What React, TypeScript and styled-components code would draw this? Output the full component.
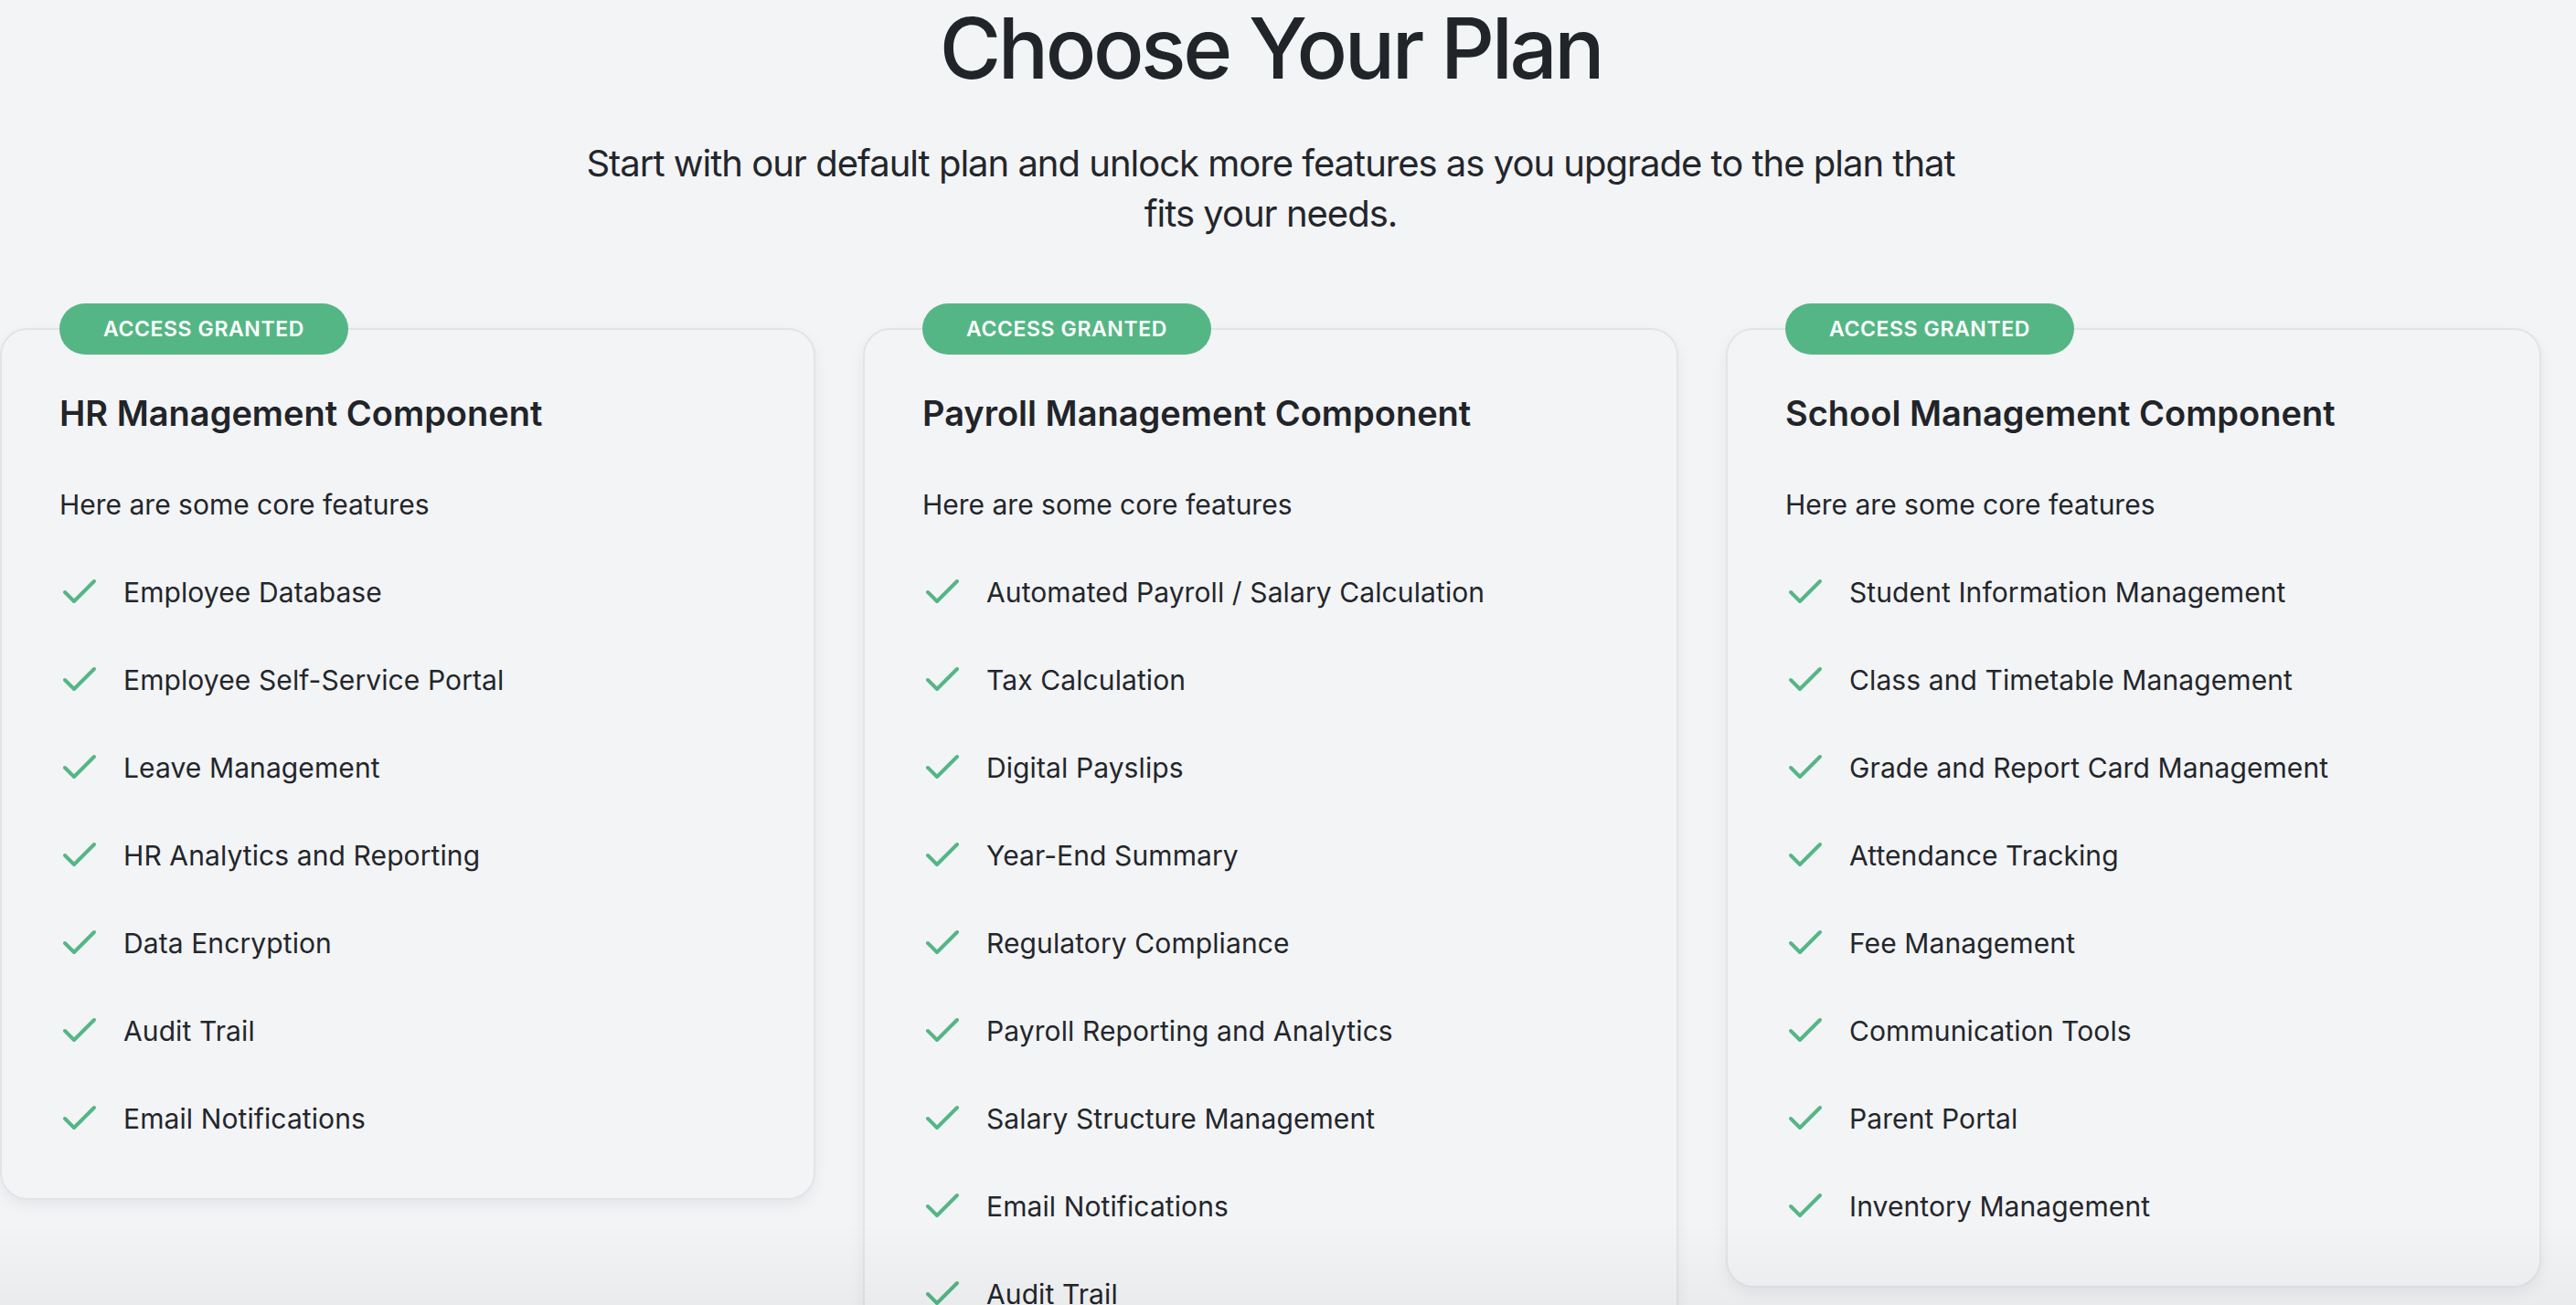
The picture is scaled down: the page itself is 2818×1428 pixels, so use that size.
import React from "react";
import styled, { createGlobalStyle } from "styled-components";
import { Check } from "lucide-react";

const GlobalStyle = createGlobalStyle`
  html, body {
    margin: 0;
    padding: 0;
    background: #f3f4f6;
    overflow: hidden;
  }
  body {
    font-family: Inter, "Noto Sans", sans-serif;
    color: #212429;
  }
  * { box-sizing: border-box; }
`;

const Page = styled.main`
  width: 2780px;
  height: 1428px;
  display: flex;
  flex-direction: column;
  align-items: center;
`;

const Title = styled.h1`
  margin: 0;
  font-size: 92px;
  line-height: 106px;
  font-weight: 500;
  letter-spacing: -3.4px;
  color: #212429;
  text-align: center;
`;

const Subtitle = styled.p`
  margin: 45px 0 0;
  width: 1560px;
  font-size: 40px;
  line-height: 55px;
  font-weight: 400;
  letter-spacing: -1px;
  color: #23262b;
  text-align: center;
`;

const Grid = styled.section`
  margin-top: 98px;
  width: 100%;
  display: grid;
  grid-template-columns: repeat(3, 1fr);
  column-gap: 52px;
  align-items: start;
`;

const Card = styled.article`
  position: relative;
  border: 2px solid #e3e4e8;
  border-radius: 30px;
  background: #f3f4f6;
  box-shadow: 0 6px 16px rgba(20, 24, 32, 0.06);
  padding: 67px 63px 39px;
`;

const Badge = styled.span`
  position: absolute;
  top: -29px;
  left: 63px;
  height: 56px;
  padding: 0 48px;
  display: inline-flex;
  align-items: center;
  border-radius: 28px;
  background: #55b685;
  color: #ffffff;
  font-size: 23px;
  font-weight: 600;
  letter-spacing: 0.6px;
  text-transform: uppercase;
`;

const CardTitle = styled.h2`
  margin: 0;
  font-size: 38px;
  line-height: 48px;
  font-weight: 600;
  letter-spacing: 0;
  color: #212429;
`;

const Lead = styled.p`
  margin: 56px 0 0;
  font-size: 30px;
  line-height: 40px;
  font-weight: 400;
  letter-spacing: 0;
  color: #23262b;
`;

const FeatureList = styled.ul`
  list-style: none;
  margin: 28px 0 0;
  padding: 0;
`;

const Feature = styled.li`
  height: 96px;
  display: flex;
  align-items: center;
  gap: 24px;
  font-size: 30px;
  line-height: 40px;
  letter-spacing: 0.1px;
  color: #23262b;

  svg {
    flex: none;
    margin-left: -2px;
    color: #55b685;
  }
`;

const BottomFade = styled.div`
  position: fixed;
  left: 0;
  right: 0;
  bottom: 0;
  height: 90px;
  pointer-events: none;
  background: linear-gradient(to bottom, rgba(0, 0, 0, 0), rgba(0, 0, 0, 0.035));
`;

type Plan = { title: string; features: string[] };

const plans: Plan[] = [
  {
    title: "HR Management Component",
    features: [
      "Employee Database",
      "Employee Self-Service Portal",
      "Leave Management",
      "HR Analytics and Reporting",
      "Data Encryption",
      "Audit Trail",
      "Email Notifications",
    ],
  },
  {
    title: "Payroll Management Component",
    features: [
      "Automated Payroll / Salary Calculation",
      "Tax Calculation",
      "Digital Payslips",
      "Year-End Summary",
      "Regulatory Compliance",
      "Payroll Reporting and Analytics",
      "Salary Structure Management",
      "Email Notifications",
      "Audit Trail",
    ],
  },
  {
    title: "School Management Component",
    features: [
      "Student Information Management",
      "Class and Timetable Management",
      "Grade and Report Card Management",
      "Attendance Tracking",
      "Fee Management",
      "Communication Tools",
      "Parent Portal",
      "Inventory Management",
    ],
  },
];

export default function App() {
  return (
    <>
      <GlobalStyle />
      <Page>
        <Title>Choose Your Plan</Title>
        <Subtitle>
          Start with our default plan and unlock more features as you upgrade to the plan that fits your needs.
        </Subtitle>
        <Grid>
          {plans.map((plan) => (
            <Card key={plan.title}>
              <Badge>Access Granted</Badge>
              <CardTitle>{plan.title}</CardTitle>
              <Lead>Here are some core features</Lead>
              <FeatureList>
                {plan.features.map((f) => (
                  <Feature key={f}>
                    <Check size={48} strokeWidth={2} />
                    <span>{f}</span>
                  </Feature>
                ))}
              </FeatureList>
            </Card>
          ))}
        </Grid>
      </Page>
      <BottomFade />
    </>
  );
}
